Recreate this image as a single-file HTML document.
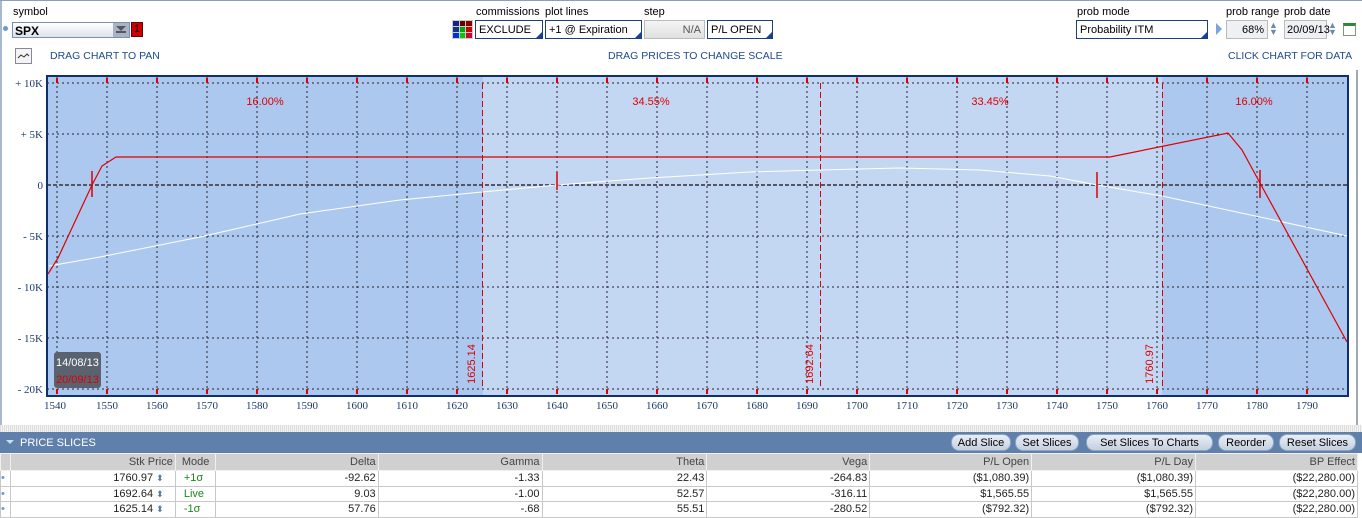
<!DOCTYPE html>
<html><head><meta charset="utf-8"><style>
*{margin:0;padding:0;box-sizing:border-box}
body{width:1362px;height:517px;overflow:hidden;background:#fff;font-family:"Liberation Sans",sans-serif;font-size:11px;color:#000;position:relative}
.a{position:absolute}
.lbl{font-size:11px;color:#000}
.box{position:absolute;border:1px solid #1b3f7a;background:#fff;font-size:11px;padding:3px 0 0 3px;height:19px}
.box:after{content:"";position:absolute;right:0;bottom:0;border-left:6px solid transparent;border-bottom:6px solid #1b3fa0}
.blue{color:#1d4a8a;font-size:10.5px}
table{border-collapse:collapse;position:absolute;left:0;top:453px;width:1358px;font-size:11px}
td{border:1px solid #c8c8c8;height:15.5px;text-align:right;padding-right:2px;color:#222}
tr.h td{background:#d0d0d0;color:#444;height:17px;border-color:#f0f0f0}
.btn{position:absolute;top:434px;height:17px;background:linear-gradient(#e8eef6,#c4d0e0);border-radius:8px;font-size:11px;text-align:center;padding-top:2px;color:#000;border:1px solid #8ea4c2}
.g{color:#1a8a1a}
</style></head><body>
<div class="a" style="left:0;top:0;width:2px;height:425px;background:#a8b8d0"></div>
<div class="a" style="left:0;top:0;width:1362px;height:1px;background:#8aa0c0"></div>
<div class="a" style="left:1356px;top:70px;width:2px;height:355px;background:#a0a8b4"></div>
<div class="a lbl" style="left:13px;top:6px">symbol</div>
<div class="a" style="left:3px;top:26px;width:5px;height:5px;border-radius:50%;background:#6a9ad0"></div>
<div class="a" style="left:12px;top:22px;width:118px;height:16px;border:1px solid #7a90b0;background:linear-gradient(#fff,#dde3ea);font-weight:bold;font-size:12px;padding:1px 2px">SPX</div>
<svg class="a" style="left:113px;top:23px" width="16" height="14"><rect width="16" height="14" fill="#a8b4c4"/><path d="M3 3H13L8 8Z" fill="#556"/><path d="M3 9H13" stroke="#556" stroke-width="2"/></svg>
<div class="a" style="left:131px;top:22px;width:12px;height:15px;background:#c00;border:1px solid #600;color:#000;font-size:11px;text-align:center">1</div>
<div class="a" style="left:15px;top:48px;width:17px;height:16px;border:1px solid #889;background:#f4f4f4"></div>
<svg class="a" style="left:17px;top:51px" width="13" height="10"><path d="M1 7 L4 4 L7 6 L10 3 L12 5" stroke="#333" fill="none"/></svg>
<div class="a blue" style="left:50px;top:50px">DRAG CHART TO PAN</div>
<div class="a blue" style="left:608px;top:50px">DRAG PRICES TO CHANGE SCALE</div>
<div class="a blue" style="left:1228px;top:50px">CLICK CHART FOR DATA</div>
<div class="a lbl" style="left:476px;top:6px">commissions</div>
<div class="a lbl" style="left:545px;top:6px">plot lines</div>
<div class="a lbl" style="left:644px;top:6px">step</div>
<div class="a" style="left:452px;top:20px;width:21px;height:19px;display:grid;grid-template-columns:repeat(3,1fr);gap:1px;background:#ccc;padding:1px">
<i style="background:#12238a"></i><i style="background:#600"></i><i style="background:#800"></i><i style="background:#138"></i><i style="background:#0a0"></i><i style="background:#c00"></i><i style="background:#03c"></i><i style="background:#0c0"></i><i style="background:#c03"></i></div>
<div class="box" style="left:475px;top:20px;width:68px">EXCLUDE</div>
<div class="box" style="left:545px;top:20px;width:97px">+1 @ Expiration</div>
<div class="a" style="left:644px;top:20px;width:61px;height:19px;border:1px solid #bbb;background:linear-gradient(#f4f4f4,#e0e0e0);text-align:right;padding:3px 3px 0 0;color:#555">N/A</div>
<div class="box" style="left:707px;top:20px;width:66px">P/L OPEN</div>
<div class="a lbl" style="left:1077px;top:6px">prob mode</div>
<div class="a lbl" style="left:1226px;top:6px">prob range</div>
<div class="a lbl" style="left:1284px;top:6px">prob date</div>
<div class="box" style="left:1076px;top:20px;width:132px">Probability ITM</div>
<div class="a" style="left:1216px;top:23px;border-left:6px solid #7aa4dc;border-top:6px solid transparent;border-bottom:6px solid transparent"></div>
<div class="a" style="left:1226px;top:20px;width:42px;height:19px;border:1px solid #bbb;background:#eef0f4;text-align:right;padding:3px 3px 0 0">68%</div>
<div class="a" style="left:1269px;top:22px;color:#6a8ab0;font-size:9px;line-height:7px">▲<br>▼</div>
<div class="a" style="left:1284px;top:20px;width:43px;height:19px;border:1px solid #bbb;background:#eef0f4;padding:3px 0 0 2px">20/09/13</div>
<div class="a" style="left:1328px;top:22px;color:#6a8ab0;font-size:9px;line-height:7px">▲<br>▼</div>
<div class="a" style="left:1343px;top:23px;width:13px;height:13px;border:1px solid #7a9a7a;border-top:3px solid #2a8a3a;background:#fff"></div>

<svg class="a" style="left:0;top:70px" width="1362" height="345" font-family="Liberation Serif,serif">
<g transform="translate(0,-70)">
<rect x="47" y="76" width="1301" height="320" fill="#adc8ee"/>
<rect x="483" y="76" width="679" height="320" fill="#c4d7f2"/>
<g stroke="#223" stroke-dasharray="2,3" stroke-width="1">
<path d="M47 83H1348M47 134H1348M47 236H1348M47 287H1348M47 338H1348M47 389H1348"/>
<path d="M57 76V396M107 76V396M157 76V396M207 76V396M257 76V396M307 76V396M357 76V396M407 76V396M457 76V396M507 76V396M557 76V396M607 76V396M657 76V396M707 76V396M757 76V396M807 76V396M857 76V396M907 76V396M957 76V396M1007 76V396M1057 76V396M1107 76V396M1157 76V396M1207 76V396M1257 76V396M1307 76V396"/>
</g>
<path d="M47 185H1348" stroke="#556" stroke-width="2" stroke-dasharray="4,2"/>
<g stroke="#d00" stroke-width="2">
<path d="M57 78v5M107 78v5M157 78v5M207 78v5M257 78v5M307 78v5M357 78v5M407 78v5M457 78v5M507 78v5M557 78v5M607 78v5M657 78v5M707 78v5M757 78v5M807 78v5M857 78v5M907 78v5M957 78v5M1007 78v5M1057 78v5M1107 78v5M1157 78v5M1207 78v5M1257 78v5M1307 78v5"/>
<path d="M57 389v5M107 389v5M157 389v5M207 389v5M257 389v5M307 389v5M357 389v5M407 389v5M457 389v5M507 389v5M557 389v5M607 389v5M657 389v5M707 389v5M757 389v5M807 389v5M857 389v5M907 389v5M957 389v5M1007 389v5M1057 389v5M1107 389v5M1157 389v5M1207 389v5M1257 389v5M1307 389v5"/>
</g>
<g stroke="#d00" stroke-dasharray="6,3" stroke-width="1"><path d="M482.5 83V389M820.5 83V389M1162.5 83V389"/></g>
<rect x="47" y="76" width="1301" height="320" fill="none" stroke="#10306a" stroke-width="2"/>
<path d="M49 266 L100 257 L200 237 L300 214 L400 200 L482 192 L557 185 L650 178 L750 172 L820 170 L900 168 L980 170 L1050 176 L1097 185 L1162 196 L1260 217 L1347 236" stroke="#fff" fill="none" stroke-width="1"/>
<path d="M48 274 L58 258 L92 185 L102 166 L116 157 L1110 157 L1228 133 L1242 150 L1260 183 L1347 342" stroke="#d00" fill="none" stroke-width="1.2"/>
<g stroke="#d00" stroke-width="1.5"><path d="M92 171V197M557 172V190M1097 172V198M1260 170V198"/></g>
<g fill="#d00" font-family="Liberation Sans,sans-serif" font-size="11" text-anchor="middle">
<text x="265" y="105">16.00%</text><text x="651" y="105">34.55%</text><text x="990" y="105">33.45%</text><text x="1254" y="105">16.00%</text>
<text transform="translate(475,364) rotate(-90)">1625.14</text>
<text transform="translate(813,364) rotate(-90)">1692.64</text>
<text transform="translate(1153,364) rotate(-90)">1760.97</text>
</g>
<g fill="#1d3a6a" font-size="11" text-anchor="end">
<text x="43" y="87">+ 10K</text><text x="43" y="138">+ 5K</text><text x="43" y="189">0</text><text x="43" y="240">- 5K</text><text x="43" y="291">- 10K</text><text x="43" y="342">- 15K</text><text x="43" y="393">- 20K</text>
</g>
<g fill="#1d3a6a" font-size="11" text-anchor="middle">
<text x="55" y="409">1540</text><text x="107" y="409">1550</text><text x="157" y="409">1560</text><text x="207" y="409">1570</text><text x="257" y="409">1580</text><text x="307" y="409">1590</text><text x="357" y="409">1600</text><text x="407" y="409">1610</text><text x="457" y="409">1620</text><text x="507" y="409">1630</text><text x="557" y="409">1640</text><text x="607" y="409">1650</text><text x="657" y="409">1660</text><text x="707" y="409">1670</text><text x="757" y="409">1680</text><text x="807" y="409">1690</text><text x="857" y="409">1700</text><text x="907" y="409">1710</text><text x="957" y="409">1720</text><text x="1007" y="409">1730</text><text x="1057" y="409">1740</text><text x="1107" y="409">1750</text><text x="1157" y="409">1760</text><text x="1207" y="409">1770</text><text x="1257" y="409">1780</text><text x="1307" y="409">1790</text>
</g>
<rect x="54" y="352" width="47" height="36" rx="3" fill="#5a6270"/>
<g font-family="Liberation Sans,sans-serif" font-size="11"><text x="56" y="366" fill="#fff">14/08/13</text><text x="56" y="383" fill="#d00">20/09/13</text></g>
</g></svg>

<div class="a" style="left:0;top:425px;width:1362px;height:7px;background:repeating-linear-gradient(90deg,#ddd 0 1px,#f4f4f4 1px 2px)"></div>
<div class="a" style="left:0;top:432px;width:1362px;height:21px;background:#5f80aa"></div>
<div class="a" style="left:6px;top:440px;border-left:4px solid transparent;border-right:4px solid transparent;border-top:4px solid #cde"></div>
<div class="a" style="left:20px;top:437px;color:#fff;font-size:11px">PRICE SLICES</div>
<div class="btn" style="left:951px;width:60px">Add Slice</div>
<div class="btn" style="left:1015px;width:64px">Set Slices</div>
<div class="btn" style="left:1086px;width:127px">Set Slices To Charts</div>
<div class="btn" style="left:1218px;width:56px">Reorder</div>
<div class="btn" style="left:1279px;width:77px">Reset Slices</div>
<table>
<colgroup><col style="width:10px"><col style="width:165px"><col style="width:40px"><col style="width:163px"><col style="width:164px"><col style="width:165px"><col style="width:163px"><col style="width:162px"><col style="width:164px"><col style="width:162px"></colgroup>
<tr class="h"><td></td><td>Stk Price</td><td style="text-align:left;padding-left:6px">Mode</td><td>Delta</td><td>Gamma</td><td>Theta</td><td>Vega</td><td>P/L Open</td><td>P/L Day</td><td>BP Effect</td></tr>
<tr><td style="color:#6a9ad0;text-align:left;padding:0">•</td><td>1760.97 <span style="color:#5a7aa0;font-size:9px">⬍</span>&nbsp;&nbsp;&nbsp;</td><td class="g" style="text-align:left;padding-left:8px">+1σ</td><td>-92.62</td><td>-1.33</td><td>22.43</td><td>-264.83</td><td>($1,080.39)</td><td>($1,080.39)</td><td>($22,280.00)</td></tr>
<tr><td style="color:#6a9ad0;text-align:left;padding:0">•</td><td>1692.64 <span style="color:#5a7aa0;font-size:9px">⬍</span>&nbsp;&nbsp;&nbsp;</td><td class="g" style="text-align:left;padding-left:8px">Live</td><td>9.03</td><td>-1.00</td><td>52.57</td><td>-316.11</td><td>$1,565.55</td><td>$1,565.55</td><td>($22,280.00)</td></tr>
<tr><td style="color:#6a9ad0;text-align:left;padding:0">•</td><td>1625.14 <span style="color:#5a7aa0;font-size:9px">⬍</span>&nbsp;&nbsp;&nbsp;</td><td class="g" style="text-align:left;padding-left:8px">-1σ</td><td>57.76</td><td>-.68</td><td>55.51</td><td>-280.52</td><td>($792.32)</td><td>($792.32)</td><td>($22,280.00)</td></tr>
</table>
</body></html>
